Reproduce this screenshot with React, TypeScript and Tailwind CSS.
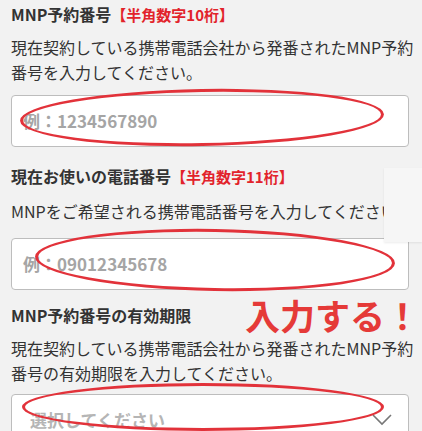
import React from "react";

const jp = "font-['Noto_Sans_CJK_JP','Noto_Sans',sans-serif]";

const field =
  "flex h-[52px] w-[398px] items-center rounded-[4px] border border-[#bdbdbd] bg-white text-[17px] font-bold";

function Ring({ className }: { className: string }) {
  return (
    <div
      className={`pointer-events-none absolute rounded-[50%] border-[3px] border-[#e2323a] ${className}`}
    />
  );
}

export default function App() {
  return (
    <div
      className={`relative h-[431px] w-[422px] overflow-hidden bg-[#f2f2f2] pl-[11px] pr-[6px] text-[#333] ${jp}`}
    >
      <h2 className="pt-[2px] text-[16px] font-bold leading-[24px]">
        MNP予約番号
        <span className="text-[15px] text-[#e2232b]">【半角数字10桁】</span>
      </h2>
      <p className="mt-[8px] text-[16px] leading-[25px]">
        現在契約している携帯電話会社から発番されたMNP予約番号を入力してください。
      </p>
      <div className={`${field} mt-[10px] px-[11px] text-[#a5a5a5]`}>
        例：1234567890
      </div>

      <h2 className="mt-[17px] text-[16px] font-bold leading-[24px]">
        現在お使いの電話番号
        <span className="text-[15px] text-[#e2232b]">【半角数字11桁】</span>
      </h2>
      <p className="mt-[10px] whitespace-nowrap text-[16px] leading-[25px]">
        MNPをご希望される携帯電話番号を入力してください
      </p>
      <div className={`${field} mt-[14px] px-[11px] text-[#a5a5a5]`}>
        例：09012345678
      </div>

      <h2 className="mt-[13px] text-[16px] font-bold leading-[24px]">
        MNP予約番号の有効期限
      </h2>
      <p className="mt-[9px] text-[16px] leading-[25px]">
        現在契約している携帯電話会社から発番されたMNP予約番号の有効期限を入力してください。
      </p>
      <div
        className={`${field} mt-[8px] justify-between pl-[18px] pr-[16px] text-[#b5b5b5]`}
      >
        <span>選択してください</span>
        <svg width="20" height="12" viewBox="0 0 20 12" fill="none">
          <path d="M1 1l9 9 9-9" stroke="#777" strokeWidth="1.6" />
        </svg>
      </div>

      {/* floating panel on the right edge */}
      <div className="absolute left-[384px] top-[168px] h-[74px] w-[38px] bg-[#f6f6f6] shadow-[0_1px_2px_rgba(0,0,0,0.08)]" />

      <Ring className="left-[20px] top-[89px] h-[57px] w-[364px] rotate-[-1deg]" />
      <Ring className="left-[35px] top-[229px] h-[62px] w-[360px] rotate-[1deg]" />
      <Ring className="left-[22px] top-[383px] h-[48px] w-[362px]" />

      <div className="absolute left-[245px] top-[293px] whitespace-nowrap text-[35px] font-bold leading-[44px] text-[#e53a38]">
        入力する！
      </div>
    </div>
  );
}
